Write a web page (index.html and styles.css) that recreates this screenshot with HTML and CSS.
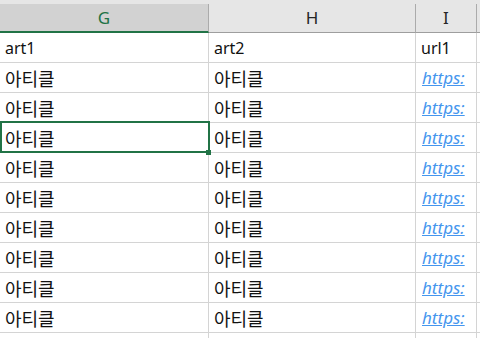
FILE: index.html
```html
<!DOCTYPE html>
<html lang="ko">
<head>
    <meta charset="UTF-8">
    <meta name="viewport" content="width=device-width, initial-scale=1.0">
    <title>Sheet</title>
    <link rel="stylesheet" href="styles.css">
</head>
<body>
    <div class="topstrip"></div>
    <div class="sheet">
        <div class="hd sel">G</div>
        <div class="hd">H</div>
        <div class="hd">I</div>
        <div class="hd last"></div>

        <div class="cell">art1</div>
        <div class="cell">art2</div>
        <div class="cell">url1</div>
        <div class="cell last"></div>

        <div class="cell"><span class="ko">아티클</span></div>
        <div class="cell"><span class="ko">아티클</span></div>
        <div class="cell"><a class="link">https:</a></div>
        <div class="cell last"></div>

        <div class="cell"><span class="ko">아티클</span></div>
        <div class="cell"><span class="ko">아티클</span></div>
        <div class="cell"><a class="link">https:</a></div>
        <div class="cell last"></div>

        <div class="cell active"><span class="ko">아티클</span><span class="handle"></span></div>
        <div class="cell"><span class="ko">아티클</span></div>
        <div class="cell"><a class="link">https:</a></div>
        <div class="cell last"></div>

        <div class="cell"><span class="ko">아티클</span></div>
        <div class="cell"><span class="ko">아티클</span></div>
        <div class="cell"><a class="link">https:</a></div>
        <div class="cell last"></div>

        <div class="cell"><span class="ko">아티클</span></div>
        <div class="cell"><span class="ko">아티클</span></div>
        <div class="cell"><a class="link">https:</a></div>
        <div class="cell last"></div>

        <div class="cell"><span class="ko">아티클</span></div>
        <div class="cell"><span class="ko">아티클</span></div>
        <div class="cell"><a class="link">https:</a></div>
        <div class="cell last"></div>

        <div class="cell"><span class="ko">아티클</span></div>
        <div class="cell"><span class="ko">아티클</span></div>
        <div class="cell"><a class="link">https:</a></div>
        <div class="cell last"></div>

        <div class="cell"><span class="ko">아티클</span></div>
        <div class="cell"><span class="ko">아티클</span></div>
        <div class="cell"><a class="link">https:</a></div>
        <div class="cell last"></div>

        <div class="cell"><span class="ko">아티클</span></div>
        <div class="cell"><span class="ko">아티클</span></div>
        <div class="cell"><a class="link">https:</a></div>
        <div class="cell last"></div>

        <div class="cell"></div>
        <div class="cell"></div>
        <div class="cell"></div>
        <div class="cell last"></div>
    </div>
</body>
</html>
```

FILE: styles.css
```css
body {
    margin: 0;
    background-color: #ffffff;
    font-family: "Noto Sans", "Noto Sans CJK KR", sans-serif;
    font-size: 16px;
    color: #111;
    overflow: hidden;
}
.topstrip {
    height: 4px;
    background-color: #e6e6e6;
}
.sheet {
    display: grid;
    grid-template-columns: 209px 207px 61px 3px;
    grid-template-rows: 29px;
    grid-auto-rows: 30px;
}
.hd {
    box-sizing: border-box;
    background-color: #e6e6e6;
    border-right: 1px solid #ababab;
    border-bottom: 1px solid #9e9e9e;
    display: flex;
    align-items: center;
    justify-content: center;
    padding-bottom: 2px;
    color: #262626;
    font-size: 17px;
}
.hd.sel {
    background-color: #d2d2d2;
    color: #217346;
    border-bottom: 2px solid #217346;
    padding-bottom: 1px;
}
.hd.last, .cell.last {
    border-right: none;
}
.cell {
    box-sizing: border-box;
    position: relative;
    border-right: 1px solid #d4d4d4;
    border-bottom: 1px solid #d4d4d4;
    display: flex;
    align-items: center;
    padding: 1px 0 0 5px;
    line-height: 1;
    white-space: nowrap;
}
.ko {
    font-family: "Noto Sans CJK KR", sans-serif;
    font-size: 18px;
    padding-bottom: 1px;
}
.link {
    color: #4596ee;
    font-style: italic;
    font-size: 17px;
    text-decoration: underline;
    margin-left: 1px;
    margin-bottom: 2px;
}
.active::after {
    content: "";
    position: absolute;
    top: -2px;
    left: 0;
    width: 210px;
    height: 32px;
    box-sizing: border-box;
    border: 2px solid #217346;
}
.handle {
    position: absolute;
    left: 206px;
    bottom: -3px;
    width: 5px;
    height: 5px;
    background-color: #217346;
    z-index: 2;
}
```
